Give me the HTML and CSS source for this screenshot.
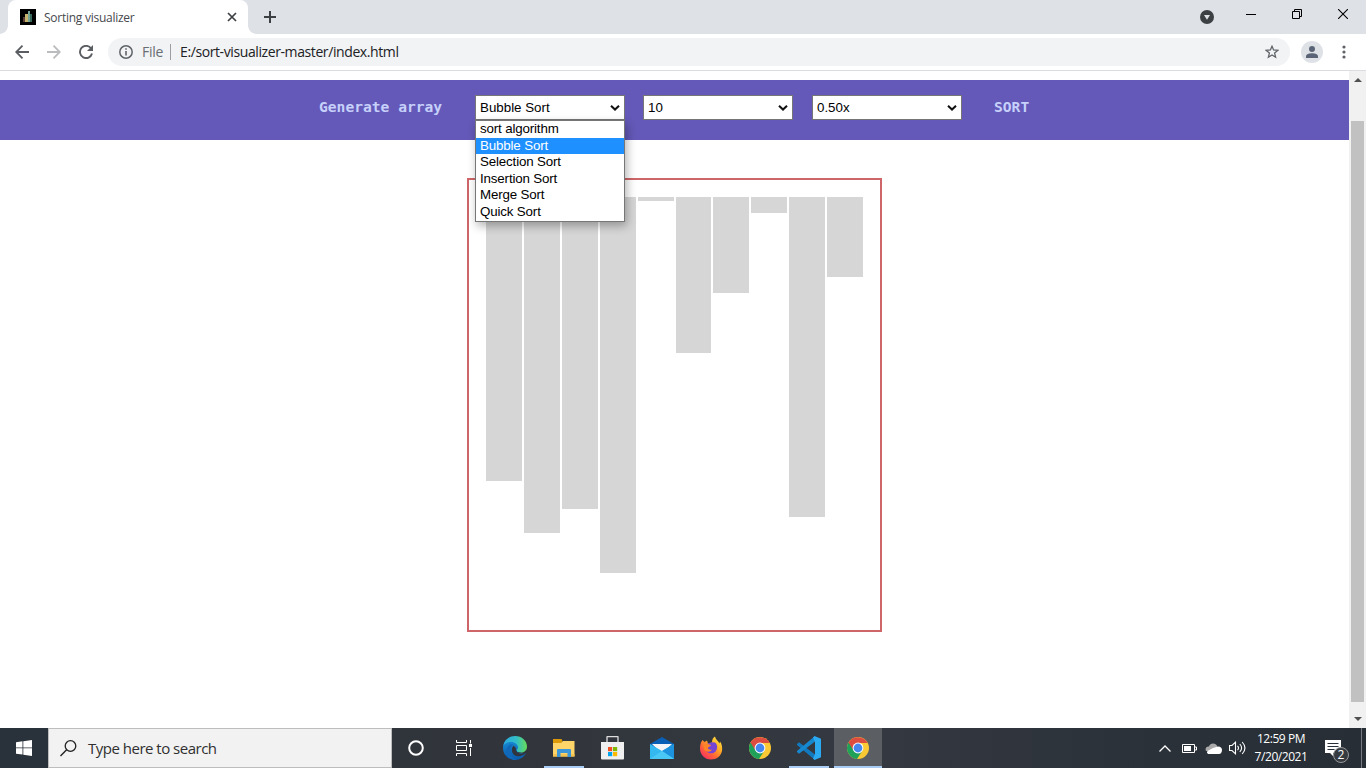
FILE: index.html
```html
<!DOCTYPE html>
<html lang="en">
<head>
<meta charset="utf-8">
<title>Sorting visualizer</title>
<link rel="stylesheet" href="styles.css">
</head>
<body>
<svg class="defs" width="0" height="0" aria-hidden="true">
  <symbol id="chrome" viewBox="0 0 24 24">
    <circle cx="12" cy="12" r="11" fill="#fbc934"/>
    <path d="M12 12 2.5 6.5A11 11 0 0 0 11 23l5.500-8.500z" fill="#1fa15a"/>
    <path d="M2.500 6.500A11 11 0 0 1 21.600 7H12l-4.500 7.500z" fill="#dc4c40"/>
    <circle cx="12" cy="12" r="5.400" fill="#fff"/>
    <circle cx="12" cy="12" r="4.400" fill="#4587f0"/>
  </symbol>
  <symbol id="chevron" viewBox="0 0 10 8">
    <path d="M1 1.700 5 5.500 9 1.700" fill="none" stroke="#111" stroke-width="2"/>
  </symbol>
</svg>

<header class="tabstrip">
  <div class="tab">
    <svg class="favicon" width="16" height="16" viewBox="0 0 16 16"><path fill="#000" d="M0 0h16v16H0z"/><path fill="#5c3b33" d="M3 8h2v5H3z"/><path fill="#c6b36d" d="M5 5h3v8H5z"/><path fill="#76a395" d="M8 2h2v11H8z"/><path fill="#37695a" d="M10 5h2v8h-2z"/></svg>
    <span class="tab-title">Sorting visualizer</span>
    <svg class="tab-close" width="10" height="10" viewBox="0 0 10 10"><path d="M1 1l8 8M9 1 1 9" stroke="#3c4043" stroke-width="1.700"/></svg>
  </div>
  <svg class="newtab" width="12" height="12" viewBox="0 0 12 12"><path d="M6 0v12M0 6h12" stroke="#3c4043" stroke-width="2"/></svg>
  <div class="window-controls">
    <svg width="14" height="14" viewBox="0 0 14 14" class="drop"><circle cx="7" cy="7" r="7" fill="#3c4043"/><path d="M4 5h6L7 9.700z" fill="#dee1e6"/></svg>
    <svg width="10" height="11" viewBox="0 0 10 11"><path d="M0 5.500h10" stroke="#000"/></svg>
    <svg width="10" height="10" viewBox="0 0 10 10"><path d="M.5 2.500h7v7h-7zM2.500 2.500v-2h7v7h-2" fill="none" stroke="#000"/></svg>
    <svg width="10" height="10" viewBox="0 0 10 10"><path d="M0 0l10 10M10 0 0 10" stroke="#000" stroke-width="1.100"/></svg>
  </div>
</header>

<div class="toolbar">
  <svg class="back" width="14" height="14" viewBox="0 0 14 14"><path d="M14 7H1.500M7.500.700 1.200 7l6.300 6.300" fill="none" stroke="#5a5d61" stroke-width="1.800"/></svg>
  <svg class="forward" width="14" height="14" viewBox="0 0 14 14"><path d="M0 7h12.500M6.500.700 12.800 7l-6.300 6.300" fill="none" stroke="#babcbe" stroke-width="1.800"/></svg>
  <svg class="reload" width="14" height="14" viewBox="0 0 14 14"><path d="M12 3.300A6.100 6.100 0 1 0 13 8.500" fill="none" stroke="#5a5d61" stroke-width="1.900"/><path d="M14 0v6H8z" fill="#5a5d61"/></svg>
  <div class="address">
    <svg width="14" height="14" viewBox="0 0 14 14"><circle cx="7" cy="7" r="6.200" fill="none" stroke="#5f6368" stroke-width="1.500"/><path d="M7 6v4.500M7 3.300v1.500" stroke="#5f6368" stroke-width="1.600"/></svg>
    <span class="scheme">File</span>
    <span class="divider"></span>
    <span class="url">E:/sort-visualizer-master/index.html</span>
    <svg class="star" width="14" height="14" viewBox="0 0 14 14"><path d="M7 1.300 8.600 5l4.200.4-3.200 2.700 1 4.100L7 10l-3.600 2.200 1-4.100L1.200 5.400 5.400 5z" fill="none" stroke="#5f6368" stroke-width="1.300"/></svg>
  </div>
  <svg class="avatar" width="22" height="22" viewBox="0 0 22 22"><circle cx="11" cy="11" r="11" fill="#dee1e6"/><circle cx="11" cy="8" r="3" fill="#5b6477"/><path d="M5 17v-1.500C5 13 8.500 12.300 11 12.300s6 .7 6 3.200V17z" fill="#5b6477"/></svg>
  <svg class="kebab" width="4" height="14" viewBox="0 0 4 14"><circle cx="2" cy="2" r="1.600" fill="#5f6368"/><circle cx="2" cy="7" r="1.600" fill="#5f6368"/><circle cx="2" cy="12" r="1.600" fill="#5f6368"/></svg>
</div>

<div class="viewport">
  <main class="page">
    <nav class="menu">
      <a class="generate">Generate array</a>
      <div class="select open"><span>Bubble Sort</span><svg width="10" height="8"><use href="#chevron"/></svg>
        <ul class="options">
          <li>sort algorithm</li>
          <li class="selected">Bubble Sort</li>
          <li>Selection Sort</li>
          <li>Insertion Sort</li>
          <li>Merge Sort</li>
          <li>Quick Sort</li>
        </ul>
      </div>
      <div class="select size"><span>10</span><svg width="10" height="8"><use href="#chevron"/></svg></div>
      <div class="select speed"><span>0.50x</span><svg width="10" height="8"><use href="#chevron"/></svg></div>
      <a class="sort">SORT</a>
    </nav>
    <section class="array">
      <div class="bar" style="height:284px"></div>
      <div class="bar" style="height:336px"></div>
      <div class="bar" style="height:312px"></div>
      <div class="bar" style="height:376px"></div>
      <div class="bar" style="height:4px"></div>
      <div class="bar" style="height:156px"></div>
      <div class="bar" style="height:96px"></div>
      <div class="bar" style="height:16px"></div>
      <div class="bar" style="height:320px"></div>
      <div class="bar" style="height:80px"></div>
    </section>
  </main>
  <div class="scrollbar">
    <svg width="8" height="4" viewBox="0 0 8 4"><path d="M0 4 4 0l4 4z" fill="#505050"/></svg>
    <div class="thumb"></div>
    <svg width="8" height="4" viewBox="0 0 8 4"><path d="M0 0l4 4 4-4z" fill="#505050"/></svg>
  </div>
</div>

<footer class="taskbar">
  <div class="start"><svg width="16" height="16" viewBox="0 0 16 16"><path fill="#fff" d="M0 2.200 6.500 1.300v6.200H0zM7.300 1.200 16 0v7.500H7.300zM0 8.300h6.500v6.300L0 13.700zM7.300 8.300H16V16l-8.700-1.300z"/></svg></div>
  <div class="search">
    <svg width="17" height="17" viewBox="0 0 17 17"><circle cx="10.500" cy="6" r="5.300" fill="none" stroke="#222" stroke-width="1.300"/><path d="M6.600 9.800.5 16" stroke="#222" stroke-width="1.400"/></svg>
    <span>Type here to search</span>
  </div>
  <div class="app cortana"><svg width="16" height="16" viewBox="0 0 16 16"><circle cx="8" cy="8" r="6.800" fill="none" stroke="#fff" stroke-width="2"/></svg></div>
  <div class="app taskview"><svg width="17" height="16" viewBox="0 0 17 16"><path d="M.5 0v2.500h10V0M.5 16v-2.500h10V16M.5 5.500h10v5H.5zM14.500 0v3.500M14.500 8v8" fill="none" stroke="#fff"/><path d="M13 4h3v3h-3z" fill="#fff"/></svg></div>
  <div class="app"><svg width="24" height="24" viewBox="0 0 24 24">
    <defs><linearGradient id="edgeTop"><stop stop-color="#2aa9df"/><stop offset=".55" stop-color="#32bec8"/><stop offset="1" stop-color="#66dc58"/></linearGradient><linearGradient id="edgeLow" x2="0" y2="1"><stop stop-color="#1993dc"/><stop offset="1" stop-color="#0b59a9"/></linearGradient></defs>
    <path d="M0 12C0 5 5 1 12 1l6 8-3 8h8c-2 4-6 7-11 7C5.500 24 0 19 0 12z" fill="url(#edgeLow)"/>
    <path d="M.3 10C1.500 3.500 6.500 0 12 0c7 0 12 5 12 10.500 0 4-3 6-6 6-2.500 0-4.300-1-4.300-2 0-.8 1.300-1.200 1.300-3C15 8.500 12 6 8 6 4 6 1.500 8 .3 10z" fill="url(#edgeTop)"/>
    <path d="M10.500 9.500C6.500 14.500 10 21.500 17.500 20c2-.5 4-1.500 5-2.500.5-.5 0-1-.6-.7-5 2-9.400-.3-9-4.800z" fill="#31343d"/>
    <path d="M10 8.500C5 13 7.500 22 14 23.800 8 25 2 20 3 14.500 3.700 11 7 7.500 10 8.500z" fill="#1268b8"/>
  </svg></div>
  <div class="app running"><svg width="22" height="19" viewBox="0 0 22 19"><path d="M0 0h8.500l1 2-1 2H0z" fill="#dc9a08"/><path d="M0 4h8l2-2h11.500v15.500H0z" fill="#ffd56a"/><path d="M0 15h21.500v2.500H0z" fill="#f5c34f"/><path d="M4 11q0-1 1-1h12q1 0 1 1v7h-3.500v-4h-7v4H4z" fill="#3d96d8"/></svg></div>
  <div class="app"><svg width="23" height="24" viewBox="0 0 23 24"><path d="M6 7V1q0-.5.500-.5h10q.5 0 .5.500v6" fill="none" stroke="#ddd" stroke-width="1.300"/><path d="M0 6h23v16.500q0 1-1 1H1q-1 0-1-1z" fill="#f0f0f0"/><path d="M7 11h4.200v4.200H7z" fill="#f25022"/><path d="M12 11h4.200v4.200H12z" fill="#7fba00"/><path d="M7 16h4.200v4.200H7z" fill="#00a4ef"/><path d="M12 16h4.200v4.200H12z" fill="#ffb900"/></svg></div>
  <div class="app"><svg width="24" height="22" viewBox="0 0 24 22"><path d="M0 7 12 0l12 7v5H0z" fill="#0a60b4"/><path d="M2 7h20l-8 8h-4z" fill="#f4f6f8"/><path d="M0 7 12 14 24 7v15H0z" fill="#33b9f0"/><path d="M12 14 24 22V7z" fill="#1d93df"/><path d="M12 14 24 22H0z" fill="#4ac8f5"/></svg></div>
  <div class="app"><svg width="24" height="24" viewBox="0 0 24 24">
    <defs><linearGradient id="fox" x1="1" x2=".2" y2="1"><stop stop-color="#fff04b"/><stop offset=".4" stop-color="#ffae25"/><stop offset=".7" stop-color="#ff6436"/><stop offset="1" stop-color="#f42c67"/></linearGradient></defs>
    <path d="M2 6.500 3.500 4l2 2L8 4.500l1 3 4-1c0-3 1-5 3-6 .5 3 3.500 4.500 4.500 7l.5-2C23 8 23.500 12 23 15c-1 5-5.500 8.500-11 8.500C5.500 23.500 1 18.500 1 12.500 1 10 1.500 8 2 6.500z" fill="url(#fox)"/>
    <path d="M8 8q4-2.500 8-1.500c2.500 2 3 6 .5 9-3 3-7.500 2-9-.5z" fill="#7544d5"/><path d="M4 8.500q5-1 8 .5c-.5 2-3 1.500-3 3s2 2 4 1.500c-1.500 3-5.500 3-8 0z" fill="#ff8428"/>
  </svg></div>
  <div class="app"><svg width="24" height="24"><use href="#chrome"/></svg></div>
  <div class="app running"><svg width="24" height="24" viewBox="0 0 24 24"><path d="M0 8 2 6.200 18 18.500V24L0 9z" fill="#1279bf"/><path d="M0 16 2 17.800 18 5.500V0L0 15z" fill="#1688cf"/><path d="M17.500 0 24 2.800v18.400L17.500 24 16 22.500 18 18V6l-2-4.500z" fill="#2ba9f1"/></svg></div>
  <div class="app active"><svg width="24" height="24"><use href="#chrome"/></svg></div>
  <div class="tray">
    <svg class="up" width="12" height="7" viewBox="0 0 12 7"><path d="M.5 6.500 6 1l5.500 5.500" fill="none" stroke="#fff" stroke-width="1.300"/></svg>
    <svg class="battery" width="15" height="9" viewBox="0 0 15 9"><path d="M.5.500h12v8H.5zM13 3h1.500v3H13" fill="none" stroke="#fff"/><path d="M2 2h7v5H2z" fill="#fff"/></svg>
    <svg class="cloud" width="17" height="11" viewBox="0 0 17 11"><path d="M1 8C-.5 5 2 3 4 3.500 5-.5 11-.5 12.500 3.500L7 8z" fill="#aaa"/><path d="M3 11q-2-1.500-.5-3L8 5l5-1.500c3 0 4 2 4 3.500 0 2-1 4-3 4z" fill="#fff"/></svg>
    <svg class="sound" width="17" height="14" viewBox="0 0 17 14"><path d="M.5 4.500h2.500L6.500 1.200v11.600L3 9.500H.5zM8.500 4.800q2 2.200 0 4.400M10.800 3q3.600 4 0 8M13.200 1q5.500 6 0 12" fill="none" stroke="#fff" stroke-width="1.100"/></svg>
    <div class="clock"><span class="time">12:59 PM</span><span>7/20/2021</span></div>
    <div class="notify"><svg width="16" height="16" viewBox="0 0 16 16"><path d="M0 0h16v13H8v3l-3-3H0z" fill="#fff"/><path d="M2.500 3.500h11M2.500 6.500h11M2.500 9.500h7" stroke="#293038"/></svg><span class="badge">2</span></div>
    <span class="peek"></span>
  </div>
</footer>
</body>
</html>
```
FILE: styles.css
```css
* { box-sizing: border-box; }
body {
  margin: 0;
  width: 1366px;
  height: 768px;
  overflow: hidden;
  display: flex;
  flex-direction: column;
  background: #fff;
  font-family: "Open Sans", "Noto Sans", sans-serif;
}
svg { display: block; flex: none; }
.defs { position: absolute; }

.tabstrip { height: 34px; flex: none; display: flex; background: #dee1e6; padding-left: 8px; }
.tab {
  position: relative;
  width: 240px;
  height: 34px;
  padding: 0 11px 0 12px;
  display: flex;
  align-items: center;
  background: #fff;
  border-radius: 8px 8px 0 0;
}
.tab::before, .tab::after {
  content: "";
  position: absolute;
  bottom: 0;
  width: 8px;
  height: 8px;
}
.tab::before { left: -8px; background: radial-gradient(circle at 0 0, transparent 7.500px, #fff 8px); }
.tab::after { right: -8px; background: radial-gradient(circle at 100% 0, transparent 7.500px, #fff 8px); }
.tab-title { margin-left: 8px; flex: 1; font-size: 12px; letter-spacing: -0.26px; color: #45484c; white-space: nowrap; }
.newtab { margin: 11px 0 0 16px; }
.window-controls { margin-left: auto; padding: 9px 18px 0 0; display: flex; gap: 36px; }
.window-controls .drop { margin: 1px -4px 0 0; }

.toolbar { height: 37px; flex: none; display: flex; align-items: center; padding: 0 20px 1px 15px; border-bottom: 1px solid #dadce0; }
.forward { margin-left: 18px; }
.reload { margin-left: 18px; }
.address {
  margin-left: 15px;
  width: 1182px;
  flex: none;
  height: 28px;
  border-radius: 14px;
  padding: 0 11px;
  display: flex;
  align-items: center;
  background: #f1f3f4;
  font-size: 14px;
  white-space: nowrap;
}
.scheme { margin-left: 9px; width: 21px; color: #6a6e73; letter-spacing: -0.3px; }
.divider { width: 1px; height: 16px; margin: 0 9px 0 7px; background: #9b9ea2; }
.url { color: #202124; letter-spacing: -0.4px; }
.star { margin-left: auto; }
.avatar { margin-left: 11px; }
.kebab { margin-left: 19px; }

.viewport { height: 657px; flex: none; display: flex; }
.page { width: 1349px; padding-top: 9px; }
.menu { height: 60px; display: flex; align-items: flex-start; padding: 15px 0 0 319px; background: #6459b8; }
.generate, .sort {
  font: bold 14.620px/24px "DejaVu Sans Mono", monospace;
  color: #c6d0fa;
  white-space: nowrap;
}
.generate { width: 156px; }
.sort { margin-left: 32px; }
.select {
  position: relative;
  width: 150px;
  height: 25px;
  border: 1px solid #767676;
  background: #fff;
  display: flex;
  align-items: center;
  justify-content: space-between;
  padding: 0 4px;
  font: 13.330px/20px "Liberation Sans", Arial, sans-serif;
  color: #000;
}
.size { margin-left: 18px; }
.speed { margin-left: 19px; }
.options {
  position: absolute;
  z-index: 2;
  left: -1px;
  top: 24px;
  width: 150px;
  height: 102px;
  margin: 0;
  padding: 0;
  list-style: none;
  background: #fff;
  border: 1px solid #767676;
  box-shadow: 2px 4px 9px rgba(0, 0, 0, .3);
  line-height: 16.600px;
  letter-spacing: -0.15px;
}
.options li { height: 16.600px; padding-left: 4px; }
.options .selected { background: #1e90ff; color: #fff; }

.array {
  width: 415px;
  height: 454px;
  margin: 38px 0 0 467px;
  padding: 17px 17px 0;
  border: 2px solid #ce6669;
  display: flex;
  align-items: flex-start;
  gap: 2px;
}
.bar { flex: 1; background: #d6d6d6; }

.scrollbar { width: 17px; background: #f1f1f1; display: flex; flex-direction: column; align-items: center; padding: 7px 0; }
.thumb { width: 13px; height: 581px; margin: 39px 0 15px; background: #c1c1c1; }

.taskbar { height: 40px; flex: none; display: flex; background: linear-gradient(90deg, #29313a, #31353b 35%, #343840 65%, #2a3139 85%, #272e36); }
.start { width: 48px; display: flex; align-items: center; justify-content: center; }
.search { width: 344px; display: flex; align-items: center; padding: 0 11px; background: #f2f2f2; border: 1px solid #bdbdbd; color: #303030; font-size: 15px; }
.search span { margin-left: 11px; letter-spacing: -0.5px; white-space: nowrap; }
.app { position: relative; width: 49px; display: flex; align-items: center; justify-content: center; }
.cortana { width: 48px; }
.taskview { width: 50px; padding-right: 1px; }
.running::after, .active::after { content: ""; position: absolute; bottom: 0; left: 5px; width: 40px; height: 2px; background: #a9ccf4; }
.active { background: #5b5f63; margin-left: 1px; width: 48px; }
.active::after { left: 0; width: 48px; }
.tray { margin-left: auto; display: flex; align-items: center; color: #fff; }
.battery { margin-left: 11px; }
.cloud { margin-left: 8px; }
.sound { margin-left: 7px; }
.clock { width: 62px; margin-left: 4px; display: flex; flex-direction: column; align-items: center; font-size: 12px; line-height: 18px; padding-bottom: 1px; white-space: nowrap; letter-spacing: -0.45px; }
.notify { position: relative; margin: 0 20px 0 13px; }
.badge {
  position: absolute;
  left: 8px;
  top: 7px;
  width: 16px;
  height: 16px;
  border: 1px solid #999;
  border-radius: 50%;
  background: #363b41;
  font-size: 12px;
  line-height: 14px;
  text-align: center;
}
.peek { width: 1px; height: 40px; margin-right: 4px; background: #747a80; }
```
